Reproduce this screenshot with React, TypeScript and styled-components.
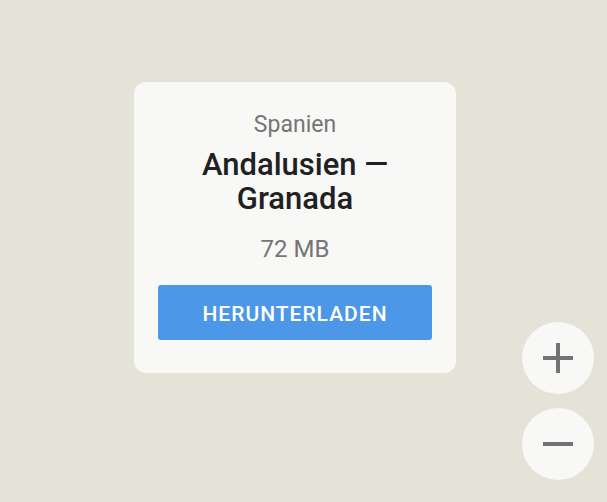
import React from "react";
import styled, { createGlobalStyle } from "styled-components";

const GlobalStyle = createGlobalStyle`
  html, body {
    margin: 0;
    padding: 0;
    background: #e5e2d7;
    font-family: Roboto, "Noto Sans", sans-serif;
  }
`;

const MapView = styled.div`
  position: relative;
  width: 607px;
  height: 502px;
  overflow: hidden;
  background: #e5e2d7;
`;

const Popup = styled.div`
  position: absolute;
  left: 134px;
  top: 82px;
  width: 322px;
  box-sizing: border-box;
  padding: 29px 24px 33px;
  display: flex;
  flex-direction: column;
  align-items: center;
  background: #f8f8f6;
  border-radius: 12px;
  text-align: center;
`;

const Country = styled.div`
  font-size: 23px;
  line-height: 28px;
  color: #757575;
`;

const Region = styled.div`
  margin-top: 9px;
  font-size: 31px;
  line-height: 34px;
  font-weight: 500;
  color: #212121;
`;

const Size = styled.div`
  margin-top: 19px;
  font-size: 24px;
  line-height: 28px;
  color: #757575;
`;

const DownloadButton = styled.button`
  margin-top: 22px;
  width: 100%;
  height: 55px;
  padding: 2px 0 0;
  border: none;
  border-radius: 3px;
  background: #4d97e8;
  color: #fff;
  font-family: inherit;
  font-size: 21px;
  font-weight: 500;
  letter-spacing: 1px;
  text-transform: uppercase;
`;

const ZoomControls = styled.div`
  position: absolute;
  right: 13px;
  top: 322px;
  display: flex;
  flex-direction: column;
  gap: 14px;
`;

const ZoomButton = styled.button`
  width: 72px;
  height: 72px;
  border: none;
  border-radius: 50%;
  background: #f8f8f6;
  display: flex;
  align-items: center;
  justify-content: center;
  padding: 0;
`;

const Plus = () => (
  <svg width="32" height="32" viewBox="0 0 32 32">
    <path d="M16 1v30M1 16h30" stroke="#737373" strokeWidth="4" />
  </svg>
);

const Minus = () => (
  <svg width="32" height="32" viewBox="0 0 32 32">
    <path d="M1 16h30" stroke="#737373" strokeWidth="4" />
  </svg>
);

const App: React.FC = () => {
  return (
    <>
      <GlobalStyle />
      <MapView>
        <Popup>
          <Country>Spanien</Country>
          <Region>
            Andalusien —<br />
            Granada
          </Region>
          <Size>72 MB</Size>
          <DownloadButton>Herunterladen</DownloadButton>
        </Popup>
        <ZoomControls>
          <ZoomButton aria-label="Vergrößern">
            <Plus />
          </ZoomButton>
          <ZoomButton aria-label="Verkleinern">
            <Minus />
          </ZoomButton>
        </ZoomControls>
      </MapView>
    </>
  );
};

export default App;
